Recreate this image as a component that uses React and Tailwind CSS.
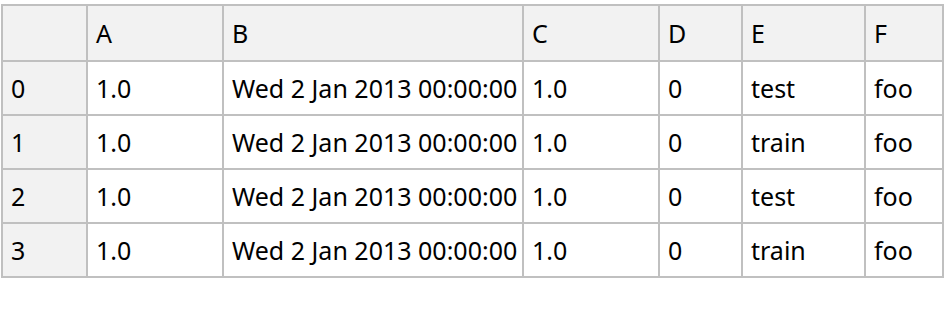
const columns = ["", "A", "B", "C", "D", "E", "F"];

const rows = [
  ["0", "1.0", "Wed 2 Jan 2013 00:00:00", "1.0", "0", "test", "foo"],
  ["1", "1.0", "Wed 2 Jan 2013 00:00:00", "1.0", "0", "train", "foo"],
  ["2", "1.0", "Wed 2 Jan 2013 00:00:00", "1.0", "0", "test", "foo"],
  ["3", "1.0", "Wed 2 Jan 2013 00:00:00", "1.0", "0", "train", "foo"],
];

export default function App() {
  return (
    <div
      className="bg-white w-[946px] h-[312px] pt-[4px] pl-[1px] text-black text-[25px]"
      style={{ fontFamily: '"Noto Sans", sans-serif' }}
    >
      <div className="inline-grid grid-cols-[83px_134px_298px_134px_81px_121px_76px] auto-rows-[52px] grid-rows-[54px] gap-[2px] p-[2px] bg-[#c0c0c0]">
        {columns.map((col, i) => (
          <div key={"h" + i} className="bg-[#f2f2f2] flex items-center pl-2 pt-[2px] whitespace-nowrap">
            {col}
          </div>
        ))}
        {rows.map((row, r) =>
          row.map((cell, c) => (
            <div
              key={r + "-" + c}
              className={`flex items-center pl-2 pt-[2px] whitespace-nowrap ${
                c === 0 ? "bg-[#f2f2f2]" : "bg-white"
              }`}
            >
              {cell}
            </div>
          ))
        )}
      </div>
    </div>
  );
}
